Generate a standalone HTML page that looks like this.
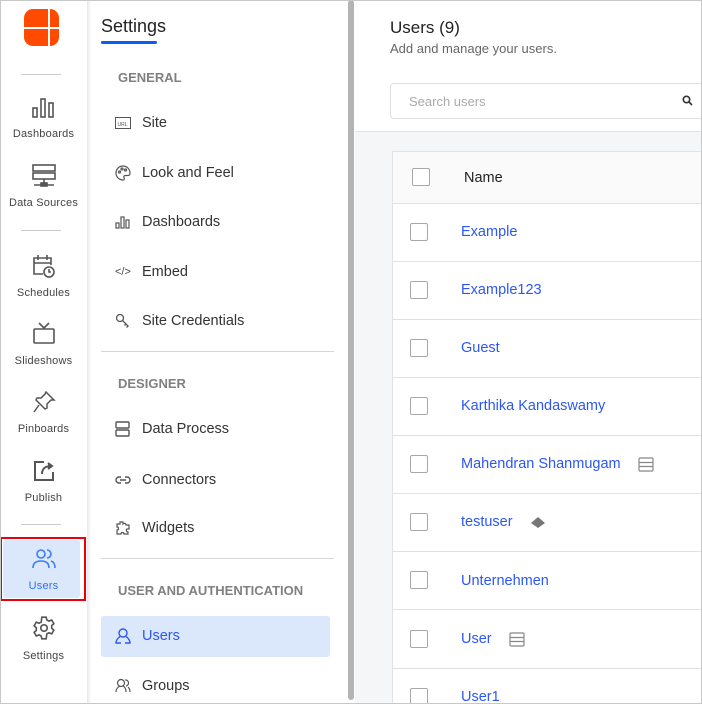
<!DOCTYPE html>
<html><head><meta charset="utf-8"><style>
*{box-sizing:border-box;margin:0;padding:0}
html{width:702px;height:704px;overflow:hidden}
body{width:702px;height:704px;overflow:hidden;font-family:"Liberation Sans",Roboto,sans-serif;background:#fff;position:relative;color:#333}
.frame{position:absolute;left:0;top:0;width:702px;height:704px;border:1px solid #c8c8c8;pointer-events:none;z-index:10}
.nav{position:absolute;left:0;top:0;width:87px;height:704px;background:#fff;box-shadow:2px 0 3px rgba(0,0,0,.1);z-index:2}
.ni{position:absolute;left:0;width:87px;text-align:center;font-size:11px;color:#444;letter-spacing:.2px}
.ni svg{display:block;margin:0 auto 9px}
.hr{position:absolute;left:21px;width:40px;height:1px;background:#ccc}
.sp{position:absolute;left:88px;top:0;width:260px;height:704px;background:#fff}
.sb{position:absolute;left:348px;top:0;width:6px;height:700px;background:#b4b4b4;border-radius:3px}
.sec{position:absolute;left:118px;font-size:13px;font-weight:bold;color:#808080}
.it{position:absolute;left:115px;font-size:14.5px;color:#333;display:flex;align-items:center}
.it svg{margin-right:11px}
.line{position:absolute;left:101px;width:233px;height:1px;background:#d6d6d6}
.main{position:absolute;left:355px;top:0;width:347px;height:704px;background:#f4f6f8;overflow:hidden}
.top{position:absolute;left:0;top:0;width:347px;height:132px;background:#fff;border-bottom:1px solid #e2e5e8}
.tbl{position:absolute;left:37px;top:151px;width:320px;height:560px;background:#fff;border:1px solid #e2e2e2}
.row{position:absolute;left:0;width:320px;height:58px;border-bottom:1px solid #e2e2e2}
.cb{position:absolute;left:17px;width:18px;height:18px;border:1px solid #a8a8a8;border-radius:2px;background:#fff}
.nm{position:absolute;left:68px;font-size:14.5px;color:#2c57f5;display:flex;align-items:center}
</style></head><body>
<div class="frame"></div>
<div class="nav">
<svg style="position:absolute;left:24px;top:9px" width="36" height="37" viewBox="0 0 36 37"><path d="M9 0H24V18H0V9A9 9 0 0 1 9 0Z M26 0A9 9 0 0 1 35 9V18H26Z M0 20H24V37H9A9 9 0 0 1 0 28Z M26 20H35V28A9 9 0 0 1 26 37Z" fill="#ff4a00"/></svg>
<div class="hr" style="top:74px"></div>
<div class="ni" style="top:97px"><svg width="24" height="22" viewBox="0 0 24 22" fill="none" stroke="#555" stroke-width="1.6"><rect x="1" y="11" width="4" height="9"/><rect x="9" y="2" width="4" height="18"/><rect x="17" y="6" width="4" height="14"/></svg>Dashboards</div>
<div class="ni" style="top:164px"><svg width="26" height="24" viewBox="0 0 26 24" fill="none" stroke="#555" stroke-width="1.6"><rect x="2" y="1" width="22" height="6"/><rect x="2" y="9" width="22" height="6"/><path d="M13 15v5M3 21h20"/><rect x="10" y="19" width="6" height="3" fill="#555"/></svg>Data Sources</div>
<div class="hr" style="top:230px"></div>
<div class="ni" style="top:254px"><svg width="26" height="24" viewBox="0 0 26 24" fill="none" stroke="#555" stroke-width="1.6"><path d="M12 20H3V4h17v7M3 9h17M7 1v5M16 1v5"/><circle cx="18" cy="18" r="5"/><path d="M18 15v3h2"/></svg>Schedules</div>
<div class="ni" style="top:322px"><svg width="24" height="24" viewBox="0 0 24 24" fill="none" stroke="#555" stroke-width="1.6"><rect x="2" y="7" width="20" height="14" rx="1"/><path d="M7 1l5 5 5-5"/></svg>Slideshows</div>
<div class="ni" style="top:390px"><svg width="24" height="24" viewBox="0 0 24 24" fill="none" stroke="#555" stroke-width="1.5"><path d="M14 2l8 8-3 0-4 4 0 4-2 1-9-9 1-2 4 0 4-4z M7 15l-5 7"/></svg>Pinboards</div>
<div class="ni" style="top:459px"><svg width="24" height="24" viewBox="0 0 24 24" fill="none" stroke="#555" stroke-width="2"><path d="M12 3H3v18h18v-8"/><path d="M10 15c0-5 3-8 9-8" /><path d="M16 4l4 3-4 3" fill="#555"/></svg>Publish</div>
<div class="hr" style="top:524px"></div>
<div style="position:absolute;left:3px;top:540px;width:77px;height:58px;background:#dbe8fb;border-radius:3px"></div>
<div style="position:absolute;left:0;top:537px;width:86px;height:64px;border:2px solid #e8000b"></div>
<div class="ni" style="top:547px;color:#2c6ff5"><svg width="26" height="24" viewBox="0 0 26 24" fill="none" stroke="#3b7bf5" stroke-width="1.6"><circle cx="10" cy="7" r="4"/><path d="M2 21c0-5 3-7 8-7s8 2 8 7M16 3a4 4 0 0 1 0 8M20 14c3 1 4 3 4 7"/></svg>Users</div>
<div class="ni" style="top:615px"><svg width="26" height="26" viewBox="0 0 24 24" fill="none" stroke="#555" stroke-width="1.5"><circle cx="12" cy="12" r="3"/><path d="M10 2h4l.6 2.6 2 1 2.5-1 2 3.4-2 1.8v2.4l2 1.8-2 3.4-2.5-1-2 1L14 22h-4l-.6-2.6-2-1-2.5 1-2-3.4 2-1.8v-2.4l-2-1.8 2-3.4 2.5 1 2-1z"/></svg>Settings</div>
</div>

<div class="sp"></div>
<div style="position:absolute;left:101px;top:16px;font-size:18px;color:#222">Settings</div>
<div style="position:absolute;left:101px;top:41px;width:56px;height:3px;background:#0a5cf5;border-radius:2px"></div>
<div class="sec" style="top:70px">GENERAL</div>
<div class="it" style="top:115px"><svg width="16" height="12" viewBox="0 0 16 12" fill="none" stroke="#555"><rect x=".5" y=".5" width="15" height="11"/><text x="2.5" y="9" font-size="5" fill="#555" stroke="none" font-family="Liberation Sans">URL</text></svg>Site</div>
<div class="it" style="top:165px"><svg width="16" height="16" viewBox="0 0 16 16" fill="none" stroke="#555" stroke-width="1.2"><path d="M8 1a7 7 0 1 0 0 14c1.5 0 1.5-1.5 1-2.5s0-2 1.5-2H13a2 2 0 0 0 2-2A7 7 0 0 0 8 1z"/><circle cx="4.5" cy="7" r="1"/><circle cx="7" cy="4" r="1"/><circle cx="10.5" cy="5" r="1"/></svg>Look and Feel</div>
<div class="it" style="top:214px"><svg width="16" height="14" viewBox="0 0 16 14" fill="none" stroke="#555" stroke-width="1.2"><rect x="1" y="8" width="3" height="5"/><rect x="6" y="2" width="3" height="11"/><rect x="11" y="5" width="3" height="8"/></svg>Dashboards</div>
<div class="it" style="top:264px"><span style="font-size:11px;color:#444;margin-right:11px;width:16px">&lt;/&gt;</span>Embed</div>
<div class="it" style="top:313px"><svg width="16" height="16" viewBox="0 0 16 16" fill="none" stroke="#555" stroke-width="1.3"><circle cx="5" cy="5" r="3.5"/><path d="M7.5 7.5l6 6M11 11l-1.5 1.5M13 13l-1.5 1.5"/></svg>Site Credentials</div>
<div class="line" style="top:351px"></div>
<div class="sec" style="top:376px">DESIGNER</div>
<div class="it" style="top:421px"><svg width="16" height="16" viewBox="0 0 16 16" fill="none" stroke="#555" stroke-width="1.4"><rect x="1" y="1" width="13" height="6" rx="1"/><rect x="1" y="9" width="13" height="6" rx="1"/></svg>Data Process</div>
<div class="it" style="top:472px"><svg width="16" height="10" viewBox="0 0 16 10" fill="none" stroke="#555" stroke-width="1.4"><path d="M6 2H4a3 3 0 0 0 0 6h2M10 2h2a3 3 0 0 1 0 6h-2M5 5h6"/></svg>Connectors</div>
<div class="it" style="top:520px"><svg width="16" height="16" viewBox="0 0 16 16" fill="none" stroke="#555" stroke-width="1.2"><path d="M5 2h3v2c1-1 3-1 3 1h3v4h-2c-1 0-1 3 1 3v2H9c0-2-3-2-3 0H2v-4c2 0 2-3 0-3V4h3z"/></svg>Widgets</div>
<div class="line" style="top:558px"></div>
<div class="sec" style="top:583px">USER AND AUTHENTICATION</div>
<div style="position:absolute;left:101px;top:616px;width:229px;height:41px;background:#dbe8fb;border-radius:3px"></div>
<div class="it" style="top:628px;color:#2c57f5"><svg width="16" height="16" viewBox="0 0 16 16" fill="none" stroke="#2c57f5" stroke-width="1.4"><circle cx="8" cy="5" r="4"/><path d="M5 8.5C3 10 1 12 1 15h5M11 8.5c2 1.5 4 3.5 4 6.5h-5"/></svg>Users</div>
<div class="it" style="top:678px"><svg width="16" height="16" viewBox="0 0 16 16" fill="none" stroke="#555" stroke-width="1.2"><circle cx="6" cy="5" r="3.5"/><path d="M1 14c0-3 2-5 4-6M8 8c2 1 3 3 3 6M10 2a3 3 0 0 1 1 6M13 9c1 1 2 3 2 5"/></svg>Groups</div>
<div class="sb"></div>

<div class="main">
<div class="top">
<div style="position:absolute;left:35px;top:18px;font-size:17px;color:#222">Users (9)</div>
<div style="position:absolute;left:35px;top:41px;font-size:13px;color:#666">Add and manage your users.</div>
<div style="position:absolute;left:35px;top:83px;width:330px;height:36px;border:1px solid #e0e0e0;border-radius:4px"></div>
<div style="position:absolute;left:54px;top:94px;font-size:13px;color:#aaa">Search users</div>
<svg style="position:absolute;left:327px;top:95px" width="11" height="11" viewBox="0 0 11 11" fill="none" stroke="#333" stroke-width="1.6"><circle cx="4.5" cy="4.5" r="3.2"/><path d="M7 7l3 3"/></svg>
</div>
<div class="tbl">
<div class="row" style="top:0;height:52px;background:#fafafa"><div class="cb" style="top:16px;left:19px"></div><div style="position:absolute;left:71px;top:18px;font-size:14.5px;color:#222;font-weight:500">Name</div></div>
<div class="row" style="top:52px"><div class="cb" style="top:19px"></div><div class="nm" style="top:20px">Example</div></div>
<div class="row" style="top:110px"><div class="cb" style="top:19px"></div><div class="nm" style="top:20px">Example123</div></div>
<div class="row" style="top:168px"><div class="cb" style="top:19px"></div><div class="nm" style="top:20px">Guest</div></div>
<div class="row" style="top:226px"><div class="cb" style="top:19px"></div><div class="nm" style="top:20px">Karthika Kandaswamy</div></div>
<div class="row" style="top:284px"><div class="cb" style="top:19px"></div><div class="nm" style="top:20px">Mahendran Shanmugam<svg style="margin-left:17px" width="16" height="15" viewBox="0 0 16 15" fill="none" stroke="#888" stroke-width="1.2"><rect x="1" y="1" width="14" height="13" rx="1"/><path d="M1 5.5h14M1 9.5h14"/></svg></div></div>
<div class="row" style="top:342px"><div class="cb" style="top:19px"></div><div class="nm" style="top:20px">testuser<svg style="margin-left:17px" width="16" height="13" viewBox="0 0 16 13"><path d="M8 1l7 6-7 5-7-5z" fill="#777"/></svg></div></div>
<div class="row" style="top:400px"><div class="cb" style="top:19px"></div><div class="nm" style="top:21px">Unternehmen</div></div>
<div class="row" style="top:459px"><div class="cb" style="top:19px"></div><div class="nm" style="top:20px">User<svg style="margin-left:17px" width="16" height="15" viewBox="0 0 16 15" fill="none" stroke="#888" stroke-width="1.2"><rect x="1" y="1" width="14" height="13" rx="1"/><path d="M1 5.5h14M1 9.5h14"/></svg></div></div>
<div class="row" style="top:517px"><div class="cb" style="top:19px"></div><div class="nm" style="top:20px">User1</div></div>
</div>
</div>
</body></html>
